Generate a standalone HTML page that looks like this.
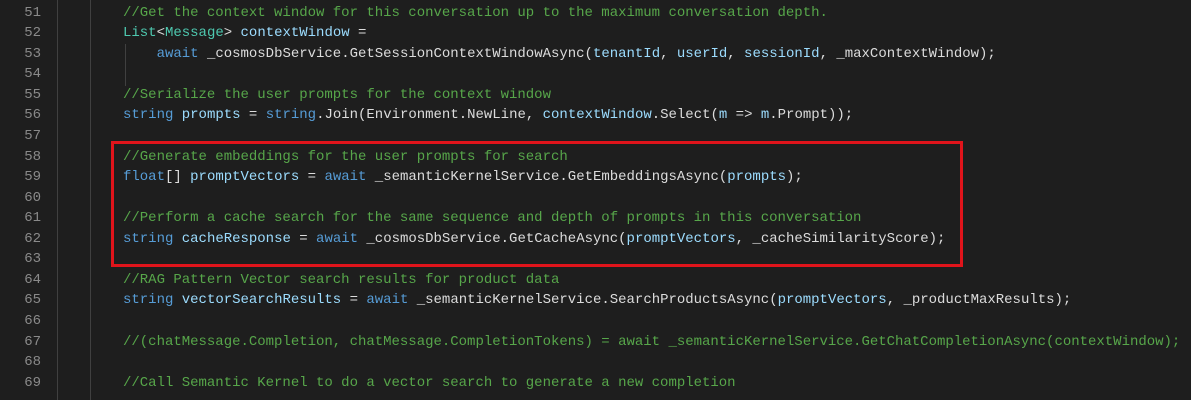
<!DOCTYPE html>
<html><head><style>
html,body{margin:0;padding:0;background:#1e1e1e;width:1191px;height:400px;overflow:hidden}
.w{position:relative;width:1191px;height:400px;font-family:"Liberation Mono",monospace;font-size:14px;letter-spacing:-0.01px}
.l{position:absolute;left:0;height:20.55px;line-height:20.55px;white-space:pre;color:#dcdcdc}
.n{position:absolute;left:0;width:41px;text-align:right;color:#8a8a8a}
.c{position:absolute;left:123px}
.cm{color:#57a64a}.k{color:#569cd6}.t{color:#4ec9b0}.v{color:#9cdcfe}
.g{position:absolute;width:1px;background:#404040}
.box{position:absolute;left:111px;top:141px;width:846px;height:120px;border:3px solid #e0141b}
</style></head><body><div class="w">
<div class="g" style="left:57px;top:0;height:400px"></div>
<div class="g" style="left:90px;top:0;height:400px"></div>
<div class="g" style="left:125px;top:44px;height:42px"></div>
<div class="l" style="top:2.7px"><span class="n">51</span><span class="c cm">//Get the context window for this conversation up to the maximum conversation depth.</span></div>
<div class="l" style="top:23.25px"><span class="n">52</span><span class="c"><span class="t">List</span>&lt;<span class="t">Message</span>&gt; <span class="v">contextWindow</span> =</span></div>
<div class="l" style="top:43.8px"><span class="n">53</span><span class="c">    <span class="k">await</span> _cosmosDbService.GetSessionContextWindowAsync(<span class="v">tenantId</span>, <span class="v">userId</span>, <span class="v">sessionId</span>, _maxContextWindow);</span></div>
<div class="l" style="top:64.35px"><span class="n">54</span></div>
<div class="l" style="top:84.9px"><span class="n">55</span><span class="c cm">//Serialize the user prompts for the context window</span></div>
<div class="l" style="top:105.45px"><span class="n">56</span><span class="c"><span class="k">string</span> <span class="v">prompts</span> = <span class="k">string</span>.Join(Environment.NewLine, <span class="v">contextWindow</span>.Select(<span class="v">m</span> =&gt; <span class="v">m</span>.Prompt));</span></div>
<div class="l" style="top:126px"><span class="n">57</span></div>
<div class="l" style="top:146.55px"><span class="n">58</span><span class="c cm">//Generate embeddings for the user prompts for search</span></div>
<div class="l" style="top:167.1px"><span class="n">59</span><span class="c"><span class="k">float</span>[] <span class="v">promptVectors</span> = <span class="k">await</span> _semanticKernelService.GetEmbeddingsAsync(<span class="v">prompts</span>);</span></div>
<div class="l" style="top:187.65px"><span class="n">60</span></div>
<div class="l" style="top:208.2px"><span class="n">61</span><span class="c cm">//Perform a cache search for the same sequence and depth of prompts in this conversation</span></div>
<div class="l" style="top:228.75px"><span class="n">62</span><span class="c"><span class="k">string</span> <span class="v">cacheResponse</span> = <span class="k">await</span> _cosmosDbService.GetCacheAsync(<span class="v">promptVectors</span>, _cacheSimilarityScore);</span></div>
<div class="l" style="top:249.3px"><span class="n">63</span></div>
<div class="l" style="top:269.85px"><span class="n">64</span><span class="c cm">//RAG Pattern Vector search results for product data</span></div>
<div class="l" style="top:290.4px"><span class="n">65</span><span class="c"><span class="k">string</span> <span class="v">vectorSearchResults</span> = <span class="k">await</span> _semanticKernelService.SearchProductsAsync(<span class="v">promptVectors</span>, _productMaxResults);</span></div>
<div class="l" style="top:310.95px"><span class="n">66</span></div>
<div class="l" style="top:331.5px"><span class="n">67</span><span class="c cm">//(chatMessage.Completion, chatMessage.CompletionTokens) = await _semanticKernelService.GetChatCompletionAsync(contextWindow);</span></div>
<div class="l" style="top:352.05px"><span class="n">68</span></div>
<div class="l" style="top:372.6px"><span class="n">69</span><span class="c cm">//Call Semantic Kernel to do a vector search to generate a new completion</span></div>
<div class="box"></div>
</div></body></html>
